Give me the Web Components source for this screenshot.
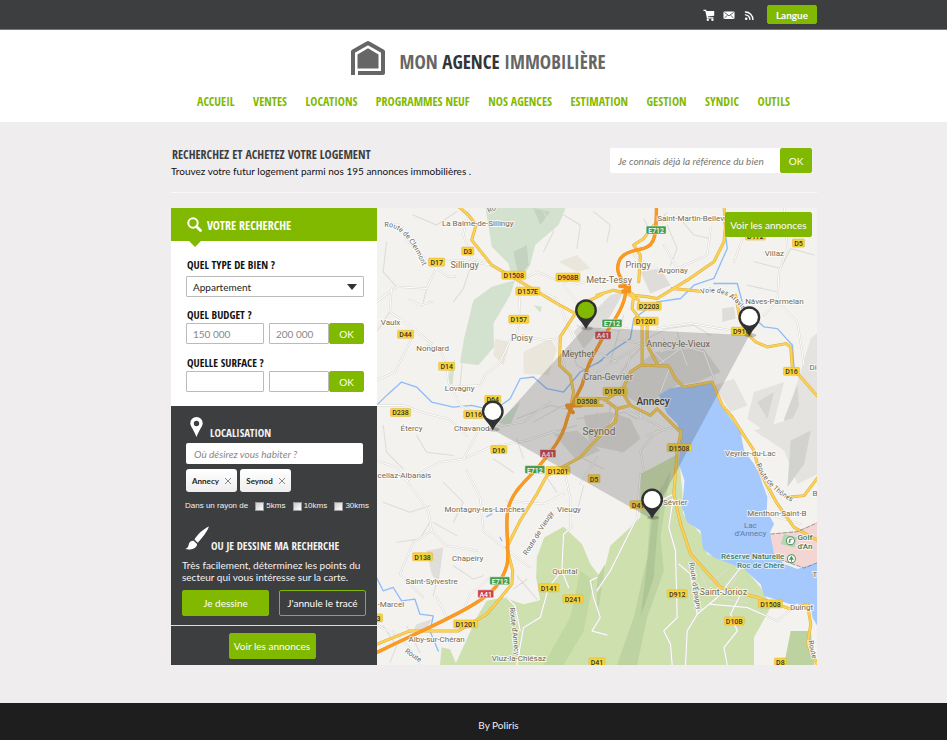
<!DOCTYPE html>
<html lang="fr">
<head>
<meta charset="utf-8">
<title>Mon Agence Immobilière</title>
<style>
  html, body { margin: 0; min-height: 100%; }
  body {
    --green: #80b900; --dark: #3d3e40;
    --cond: "Open Sans Condensed", "Roboto Condensed", sans-serif;
    --left: 171px; --right: 130px;
    background: #efedee; color: #222;
    font: 10px/12px Lato, "Open Sans", sans-serif;
  }
  agence-page { min-height: 100vh; }
</style>
</head>
<body>
<agence-page>
  <top-bar slot="top"></top-bar>
  <site-header slot="top"></site-header>
  <search-intro></search-intro>
  <search-board>
    <search-panel slot="side"></search-panel>
    <town-map></town-map>
  </search-board>
  <site-footer slot="bottom">By Poliris</site-footer>
</agence-page>

<script>
const base = `<style>
  *, *::before, *::after { box-sizing: border-box; }
  :host { display: block; }
  h1, h2, h3, p { margin: 0; }
  a { text-decoration: none; color: inherit; }
  input, select, button { font: inherit; margin: 0; }
</style>`;
function define(name, html) {
  customElements.define(name, class extends HTMLElement {
    constructor() {
      super();
      this.attachShadow({ mode: "open" }).innerHTML = base + html;
    }
  });
}

define("agence-page", `<style>
  :host { display: flex; flex-direction: column; }
  main { flex: 1; padding: 26px var(--right) 38px var(--left); }
</style>
<slot name="top"></slot><main><slot></slot></main><slot name="bottom"></slot>`);

define("green-button", `<style>
  :host { display: inline-flex; }
  button { flex: 1; border: 1px solid var(--green); border-radius: 2px; background: var(--green); color: #fff;
    padding: 0; text-align: center; white-space: nowrap; }
  :host([outline]) button { background: transparent; }
  :host([strong]) button { font-weight: 700; }
</style>
<button type="button"><slot></slot></button>`);

define("top-bar", `<style>
  :host { background: var(--dark); border-bottom: 1px solid #77787a; }
  div { display: flex; justify-content: flex-end; align-items: center; gap: 8px; height: 29px; padding-right: var(--right); }
  a { display: flex; }
  svg { width: 12px; height: 12px; fill: #fff; }
  green-button { width: 50px; height: 19px; margin-left: 4px; }
</style>
<div>
  <a href="#panier" aria-label="Panier"><svg viewBox="0 0 12 12"><path d="M.5.800h2.600l.5 1.300H11.200v4.600L4.800 7.400l.2.900H10.500v1.200H4L2.300 2.100H.5z"/><circle cx="4.800" cy="10.700" r="1.200"/><circle cx="9.400" cy="10.700" r="1.200"/></svg></a>
  <a href="#contact" aria-label="Contact"><svg viewBox="0 0 12 12"><rect x=".5" y="2.500" width="11" height="7.500" rx="1"/><path d="M1.500 3.500 6 6.800l4.500-3.300M1.500 9 4.500 6.200M10.500 9 7.500 6.200" fill="none" stroke="#3d3e40" stroke-width=".8"/></svg></a>
  <a href="#rss" aria-label="Flux RSS"><svg viewBox="0 0 12 12"><circle cx="3.200" cy="9.700" r="1.300"/><path d="M1.900 5.900a4.500 4.500 0 0 1 5 5M1.900 3a7.600 7.600 0 0 1 8 8" fill="none" stroke="#fff" stroke-width="1.400"/></svg></a>
  <green-button strong>Langue</green-button>
</div>`);

define("site-header", `<style>
  :host { background: #fff; padding: 9px 157px 11px 197px; }
  .logo { display: flex; align-items: center; justify-content: center; gap: 14px; color: #666; padding-right: 32px; }
  .logo svg { width: 36px; height: 36px; }
  h1 { font: 700 19px/30px var(--cond); white-space: nowrap; padding-top: 8px; }
  b { color: #333436; }
  nav { display: flex; justify-content: space-between; margin-top: 16px; font: 700 12px/18px var(--cond); color: var(--green); white-space: nowrap; }
</style>
<a class="logo" href="#accueil">
  <svg viewBox="0 0 36 36" fill="none" stroke="#666" stroke-width="4">
    <path d="M3 35V11.500L18 3l15 8.500V33H8" stroke-linejoin="round"/>
    <path d="M7.500 28.500V14.500L18 8.300l10.500 6.200v14z" fill="#666" stroke="none"/></svg>
  <h1>MON <b>AGENCE</b> IMMOBILIÈRE</h1>
</a>
<nav>
  <a href="#accueil">ACCUEIL</a><a href="#ventes">VENTES</a><a href="#locations">LOCATIONS</a><a href="#neuf">PROGRAMMES NEUF</a><a href="#agences">NOS AGENCES</a><a href="#estimation">ESTIMATION</a><a href="#gestion">GESTION</a><a href="#syndic">SYNDIC</a><a href="#outils">OUTILS</a>
</nav>`);

define("search-intro", `<style>
  :host { display: flex; justify-content: space-between; align-items: flex-start; padding: 0 5px 15px 0; border-bottom: 1px solid #faf9fa; margin-bottom: 15px; }
  h2 { font: 700 12px/14px var(--cond); color: var(--dark); padding-left: 1px; }
  p { margin-top: 3px; color: #111; }
  form { display: flex; height: 25px; }
  input { width: 170px; border: 0; border-radius: 2px 0 0 2px; background: #fff; padding: 0 8px; font-style: italic; }
  input::placeholder { color: #777; opacity: 1; }
  green-button { width: 32px; }
</style>
<div><h2>RECHERCHEZ ET ACHETEZ VOTRE LOGEMENT</h2>
<p>Trouvez votre futur logement parmi nos 195 annonces immobilières .</p></div>
<form><input aria-label="Référence du bien" placeholder="Je connais déjà la référence du bien"><green-button>OK</green-button></form>`);

define("search-board", `<style>
  :host { display: grid; grid-template-columns: 206px 1fr; }
</style><slot name="side"></slot><slot></slot>`);

define("search-panel", `<style>
  :host { display: flex; flex-direction: column; background: #fff; }
  header { position: relative; display: flex; align-items: center; gap: 5px; height: 33px; padding-left: 16px; background: var(--green); color: #fff; }
  header::after { content: ""; position: absolute; left: 18px; top: 33px; border: 6px solid transparent; border-top-color: var(--green); border-bottom: 0; }
  h2, h3, .label { font: 700 11px/16px var(--cond); white-space: nowrap; }
  header h2 { font-size: 12px; padding-top: 2px; }
  header svg { width: 15px; height: 15px; }
  .criteria { padding: 16px 13px 14px 15px; color: #111; }
  .label { display: block; padding-left: 1px; }
  input, select { width: 100%; height: 21px; border: 1px solid #bbb; border-radius: 1px; background: #fff; color: #222; padding: 0 6px; min-width: 0; }
  input::placeholder { color: #888; opacity: 1; }
  select { appearance: none; display: block; }
  .select { position: relative; margin: 3px 0 10px; }
  .select::after { content: ""; position: absolute; right: 7px; top: 8px; border: 5px solid transparent; border-top: 6px solid #333; border-bottom: 0; pointer-events: none; }
  .range { display: grid; grid-template-columns: 78px 1fr 35px; }
  .range input + input { margin-left: 5px; width: auto; }
  .budget { margin-bottom: 11px; }
  .place { flex: 1; background: var(--dark); color: #f3f3f3; padding: 11px 11px 9px; }
  .title { display: flex; align-items: flex-end; }
  .pin { gap: 7px; padding-left: 8px; } .pin svg { width: 13px; height: 20px; }
  .brush { gap: 2px; padding-left: 3px; } .brush svg { width: 24px; height: 24px; }
  .title h3 { margin-bottom: -4px; }
  .place input[type=text] { display: block; width: 177px; margin: 6px 4px 5px; border: 0; border-radius: 2px; font-style: italic; padding: 0 8px; }
  .tags { display: flex; gap: 3px; padding-left: 4px; }
  .tags button { display: flex; align-items: center; justify-content: center; gap: 6px; width: 51px; height: 23px; padding: 0; border: 0; border-radius: 3px; background: linear-gradient(#fff, #eee); color: #222; font-size: 8px; font-weight: 700; }
  .tags svg { width: 6px; height: 6px; stroke: #888; stroke-width: 1; }
  .radius { display: flex; justify-content: space-between; align-items: center; margin: 8px -3px 14px 3px; font: 8px/12px "Liberation Sans", sans-serif; white-space: nowrap; }
  .radius label { display: flex; align-items: center; gap: 2px; }
  .radius input { appearance: none; width: 9px; height: 9px; padding: 0; border: 1px solid #999; border-radius: 0; background: linear-gradient(135deg, #ccc, #fff); }
  .actions { display: flex; justify-content: space-between; margin-top: 7px; }
  .actions green-button, footer green-button { width: 87px; height: 26px; }
  .brush + p { margin-top: 9px; white-space: nowrap; }
  footer { display: flex; justify-content: center; padding: 7px 4px 6px 0; border-top: 1px solid #ddd; background: var(--dark); }
</style>
<header><svg viewBox="0 0 15 15" fill="none" stroke="#fff"><circle cx="6" cy="6" r="4.700" stroke-width="2"/><path d="m9.500 9.500 4 4" stroke-width="2.800" stroke-linecap="round"/></svg><h2>VOTRE RECHERCHE</h2></header>
<div class="criteria">
  <label class="label" for="type">QUEL TYPE DE BIEN ?</label>
  <div class="select"><select id="type"><option>Appartement</option></select></div>
  <label class="label" for="bmin">QUEL BUDGET ?</label>
  <div class="range budget"><input id="bmin" placeholder="150 000"><input aria-label="Budget maximum" placeholder="200 000"><green-button>OK</green-button></div>
  <label class="label" for="smin">QUELLE SURFACE ?</label>
  <div class="range"><input id="smin"><input aria-label="Surface maximum"><green-button>OK</green-button></div>
</div>
<div class="place">
  <div class="title pin"><svg viewBox="0 0 13 20"><path fill="#fff" fill-rule="evenodd" d="M6.500 0A6.200 6.200 0 0 0 .3 6.300C.3 9.500 3.500 12 6.500 20 9.500 12 12.700 9.500 12.700 6.300A6.200 6.200 0 0 0 6.500 0zm0 3.800a2.700 2.700 0 1 1 0 5.400 2.700 2.700 0 0 1 0-5.400z"/></svg><h3>LOCALISATION</h3></div>
  <input type="text" aria-label="Localisation" placeholder="Où désirez vous habiter ?">
  <div class="tags">
    <button type="button">Annecy <svg viewBox="0 0 6 6"><path d="m0 0 6 6M6 0 0 6"/></svg></button>
    <button type="button">Seynod <svg viewBox="0 0 6 6"><path d="m0 0 6 6M6 0 0 6"/></svg></button>
  </div>
  <div class="radius"><span>Dans un rayon de</span><label><input type="checkbox">5kms</label><label><input type="checkbox">10kms</label><label><input type="checkbox">30kms</label></div>
  <div class="title brush"><svg viewBox="0 0 24 24" fill="#fff"><path d="M24 .5C18 3 12.500 8.500 9.500 13.500l3.200 3.200C17 12 22 6 24 .5zM8.600 14.800C5.500 14.600 4 16.500 3.600 19c-.3 2-1.300 3-3.300 4 4 1 10 .5 11.500-3.500.3-1 .2-1.400 0-1.800z"/></svg><h3>OU JE DESSINE MA RECHERCHE</h3></div>
  <p>Très facilement, déterminez les points du<br>secteur qui vous intéresse sur la carte.</p>
  <div class="actions"><green-button>Je dessine</green-button><green-button outline>J'annule le tracé</green-button></div>
</div>
<footer><green-button>Voir les annonces</green-button></footer>`);

define("site-footer", `<style>
  :host { background: #1e1e1e; color: #eee; text-align: center; padding: 16px 0 9px 50px; }
</style><slot></slot>`);

/* Origins of the drawing tiles (E spans the whole map); tile paths use 3 units per map pixel. */
const tiles = { A: [0, -3], B: [220, -3], C: [0, 222], D: [220, 222], E: [0, -3] };
const land = [
  ["A", "#d3e2cf", "M325 0H570L545 60 475 120 460 180 430 225 405 218 395 175 345 125Z"],
  ["A", "#c3d3c0", "M410 140 450 120 455 180 425 215Z M470 10 520 20 490 60Z"],
  ["A", "#d3e2cf", "M290 285 345 245 415 225 400 270 350 355 352 425 305 480 250 472 262 400Z M220 485 235 460 228 535 215 540Z M360 650 430 590 400 660Z M470 300 495 305 490 322Z"],
  ["A", "#ebe6db", "M355 400 400 410 380 480 350 450Z M440 440 520 400 540 430 515 510 440 505Z M545 170 600 150 640 190 600 200Z"],
  ["E", "#dfddd9", "M790 200 850 190 880 240 820 265Z M1035 310 1070 305 1075 340 1035 350Z M860 30 870 20 855 60Z M590 380 640 330 700 270 740 260 690 350 620 430Z M830 440 980 430 1030 500 960 530 900 540 800 600 720 560 760 500Z M620 630 700 620 760 640 790 700 740 740 640 720Z"],
  ["B", "#e4e3e0", "M545 690 590 560 640 400 662 380 662 690Z M470 560 560 530 520 690 450 640Z M350 540 410 520 450 600 400 620Z"],
  ["B", "#d6d5d2", "M560 640 600 540 605 600 570 670Z M480 590 530 560 510 640Z"],
  ["D", "#e4e3e0", "M470 0 662 -60 662 130 600 160 560 60Z"],
  ["D", "#d2d2d1", "M580 30 640 0 620 100 570 170Z"],
  ["C", "#e0deda", "M120 580 165 565 150 595 110 600Z M530 10 600 0 670 60 600 90Z M150 360 200 350 185 460 165 430Z"],
  ["C", "#cde0ae", "M235 702 300 560 330 510 380 500 440 520 490 508 478 440 480 380 502 320 560 288 615 340 640 400 675 445 700 345 760 290 790 260 790 130 905 70 915 180 918 250 970 310 990 370 1100 410 1150 470 1182 525 1130 620 1130 702Z M195 650 220 655 240 702H190Z"],
  ["D", "#bdd3a2", "M160 240 220 120 190 320 200 420 150 560 120 702H60L110 560 150 380Z M0 440 25 400 0 560Z"],
  ["D", "#aec595", "M165 270 195 160 178 330 170 440 130 560 150 400Z"],
  ["C", "#c2d8a3", "M610 420 650 450 620 600 560 702H500L580 560Z"],
  ["D", "#bcd39f", "M580 600 640 600 650 702H560Z"],
  ["D", "#f3d5d3", "M520 310 600 300 662 275V395L620 412 530 380Z"],
  ["D", "#b4d7b0", "M550 340 590 350 600 320 560 310Z"],
  ["D", "#a5c8fd", "M185-105 215-125 265-135 345-140 368-80 405-30 430 5 440 60 470 100 485 130 510 200 508 240 530 280 518 305 530 370 560 400 600 415 662 395V590L645 560 640 525 580 520 500 495 490 460 440 415 350 380 318 355 310 300 270 275 255 230 262 150 245 100 250 10 240-20 210-50Z"],
];
const small = [
  ["A", "M0 290 60 245 150 250 190 165 255 165 340 180 M45 250 40 320 100 360 165 415 M0 525 55 500 105 400 M25 55 70 60 90 105 150 165 170 185 215 215 235 215 M275 20 260 90 285 160 345 180 M190 430 210 480 215 530 250 600 300 625"],
  ["A", "M435 225 480 200 540 225 600 235 660 225 M540 400 500 405 450 395 400 405 370 470 325 510 310 540 220 545 M540 400 565 490 M0 600 80 600 150 625 215 640 270 690 M350 665 440 650 520 590 M165 290 130 300 100 285 M425 235 430 330 420 390 M445 245 540 280 560 330 590 400 M560 240 600 290 650 300"],
  ["B", "M200 120 240 190 330 150 340 70 M410 170 440 90 520 60 600 90 640 80 M560 0 570 130 545 200 540 290 500 330 M470 300 430 380 280 355 180 370 M0 380 90 370 M545 295 600 350 620 480 M190 440 250 420 320 440 350 520 M60 400 150 420 200 470 M180 480 250 430 M0 500 80 450 130 420 M110 150 170 190 260 200"],
  ["C", "M0 90 60 110 90 150 155 240 165 300 210 345 300 360 M90 150 190 95 260 85 340 50 450 30 540 0 M270 120 310 200 320 300 380 350 M260 85 300 10 M50 600 90 640 130 702 M0 580 50 610 M165 300 110 335 70 430 140 500 M180 500 210 560 M260 540 280 490 340 440 M395 360 460 410 M610 160 660 80 M560 110 580 200 580 290 M390 210 500 220 560 190"],
  ["C", "M585 290 560 310 555 420 515 470 490 560 440 590 420 702 M555 420 575 470 M390 500 415 525 430 600 M660 440 640 450 650 500 670 560 645 600 690 612 M790 130 780 260 700 420 660 480"],
  ["D", "M230 190 215 290 235 360 240 560 200 600 220 640 225 702 M300 550 270 600 265 702 M245 400 280 430 300 550 360 500 430 410 M430 490 400 550 420 600 380 650 390 702 M340 520 450 530 540 570 600 520 M140 120 130 60 180 0 M230 190 190 210 M510 250 610 280 M460 40 520 200"],
  ["B", "M0 440 60 470 M20 590 110 620 200 670 M150 690 240 660 M60 620 20 690 M100 450 70 560 M220 480 190 560 M240 400 270 480 M130 640 130 600"],
];
const streets = [
  ["E", "M500 20 530 80 500 140 M560 30 610 60 600 130 M650 20 700 60 690 110 M870 60 900 130 880 180 M900 30 950 90 1000 100 M1130 170 1210 190 1240 130 1310 150 M1110 240 1200 260 M800 40 830 100 M740 330 720 400 700 470 M640 340 690 300 M600 360 650 390 700 390 M580 430 600 480 640 500 M720 520 760 460 790 430 M810 400 870 370 950 360 1000 390 M820 520 850 480 900 460 M860 400 880 480 M900 380 930 470 950 530 M850 440 960 430 M870 500 980 470 M750 570 800 540 830 500 M780 520 820 560 M680 640 740 620 780 640 M640 660 700 700 760 690 M660 620 650 740 M700 600 690 720 M740 640 730 740 M600 640 660 630 M470 650 560 600 M420 640 520 600 570 610 M490 690 600 660 M600 700 620 760 680 790"],
  ["E", "M30 110 20 200 60 245 M110 30 180 60 240 20 M150 250 140 290 M0 380 40 320 M230 290 260 250 280 190 M250 540 260 440 M150 420 190 430 M20 660 30 740 80 790 M120 690 150 740 230 750 M20 890 100 920 160 900 M200 830 260 890 230 950 M170 950 240 990 M420 700 440 760 M350 760 410 800 M60 1010 130 1000 160 950 M230 1080 290 1120 320 1110 M160 1040 190 1080 170 1170 M20 1260 60 1320 40 1370 M90 1260 130 1340 M420 1110 480 1180 M410 1150 450 1120 M620 840 600 920 M500 800 540 860 M1050 1090 1000 1130 M1080 1110 1040 1180 1110 1190 M970 1100 1000 1170"],
];
const water = [
  ["A", "M0 600 30 570 75 530 120 545 165 590 230 605 285 600 350 615 400 580 430 520 470 515 510 550 560 560 610 500 675 465"],
  ["B", "M380 50 390 130 350 220 290 240 250 280 180 290 110 340 100 400 40 440 0 475 M350 235 420 235 440 310 500 365 540 370 585 420 590 490"],
  ["C", "M0 440 20 480 50 470 75 510 115 505 130 550 170 555 160 600 185 660 M370 320 375 330 M330 258 345 250"],
];
const yellow = [
  ["A", "M240 0 275 30 298 60 285 105 345 180 440 235 540 295 595 325 640 285 675 268"],
  ["A", "M595 325 550 395 548 480 580 510 590 560 582 600 675 600"],
  ["B", "M380 0 385 60 380 110 350 170 270 225 180 280 150 275 110 270 85 250 M0 270 50 255 90 265 125 285 M125 230 130 150 110 120 140 100 170 60 M110 270 105 310 135 350 135 480 M150 340 150 420 180 475 M225 250 310 258"],
  ["B", "M415 270 430 350 455 390 475 410 510 425 565 415 580 425 585 490 610 515 662 575"],
  ["B", "M0 580 30 580 75 555 100 500 130 480 215 482 235 520 260 545 345 530 375 600 405 635 440 690 M60 610 55 650 0 690 M75 560 100 600 120 610 160 630 180 610 250 680 252 700 M20 580 60 610 100 600"],
  ["C", "M0 640 100 600 245 600 330 550 405 460 408 420 390 350 430 270 480 190 510 135 610 80 675 10"],
  ["D", "M252 0 240 60 230 190 250 280 280 370 370 470 480 500 580 535 630 520 640 580 630 640 660 702 M430 0 470 60 485 120 540 220 590 290 662 330 M570 200 620 195 662 140"],
];
const orange = [
  ["E", "M838 0C838 90 835 120 800 130C750 140 722 150 722 190C722 220 748 225 746 260C740 320 690 370 665 420C640 460 625 500 615 540C590 590 575 620 565 660C550 710 515 745 480 790C430 840 400 870 392 920C385 980 400 1040 390 1080C375 1130 350 1160 290 1196C220 1240 100 1290 0 1340"],
];
/* [text, x, y, size, anchor] */
const towns = [
  ["La Balme-de-Sillingy",101,18,8],["Sillingy",88,60],["Vaulx",14,117,8],["Nonglard",56,143,8],["Poisy",145,133],["Meythet",201,149],
  ["Lovagny",83,183,8],["Étercy",35,223,8],["Chavanod",95,223,8],["Metz-Tessy",232,75],["Cran-Gevrier",231,172],["Seynod",222,227,10],
  ["Annecy-le-Vieux",301,139],["Saint-Martin-Bellevue",280,13,8,"start"],["Pringy",261,60],["Argonay",296,65,8],["Villaz",397,48,8],["Nâves-Parmelan",397,96,8],
  ["Din",432,162,8,"start"],["cellaz-Albanais",1,269,8,"start"],["Montagny-les-Lanches",108,303,8],["Vieugy",192,303,8],["Chapeiry",91,352,8],["Quintal",188,365,8],
  ["Saint-Sylvestre",55,375,8],["-Marcel",1,398,8,"start"],["Alby-sur-Chéran",60,433,8],["Viuz-la-Chiésaz",142,452,8],["Veyrier-du-Lac",373,247,8],["Sévrier",298,296,8],
  ["Menthon-Saint-B",370,307,8,"start"],["Saint-Jorioz",346,386],["Duingt",424,401,8],["B",435,287,8,"start"],["T",435,368,8,"start"],
];
const shields = [
  ["D3",91,43],["D17",60,54],["D1508",137,67],["D908B",191,69],["D157E",151,83],["D157",142,111],["D44",29,126],["D14",70,158],["D238",24,204],
  ["D64",116,191],["D116",97,206],["D3508",210,193],["D2203",272,98],["D1201",269,113],["D5",421,35],["D172",378,28],["D916",364,123],["D16",414,163],
  ["D1501",238,183],["D16",122,241],["D5",217,270],["D1201",181,262],["D138",46,348],["D141",172,379],["D241",196,390],["D1201",89,415],["3",2,409],
  ["D1508",302,239],["D41",261,296],["D912",300,385],["D1508",393,395],["D10B",357,412],["D41",220,453],["D8",403,453],
  ["E712",279,22,"e"],["E712",235,115,"e"],["E712",158,261,"e"],["E712",123,372,"e"],["A41",226,127,"a"],["A41",171,245,"a"],["A41",109,385,"a"],
];
const at = (t, inner) => `<g transform="translate(${tiles[t]}) scale(.3333)">${inner}</g>`;
const lines = (list, cls) => list.map(([t, d]) => at(t, `<path class="${cls}" d="${d}"/>`)).join("");
const pin = (x, y, fill) => `<g transform="translate(${x} ${y})"><ellipse cx="1" cy="18" rx="6" ry="2" opacity=".2"/><path fill="#2f3032" d="M0-11A11 11 0 0 0-10.500 3C-9 8-4 11 0 19 4 11 9 8 10.500 3A11 11 0 0 0 0-11z"/><circle r="8.500" fill="${fill}"/></g>`;

define("town-map", `<style>
  :host { position: relative; min-width: 0; min-height: 456px; overflow: hidden; background: #f3f2ef; }
  svg { display: block; width: 100%; height: 100%; }
  path { stroke-linejoin: round; stroke-linecap: round; }
  .case, .white, .street, .water, .ycase, .yel, .ocase, .or { fill: none; }
  .case { stroke: #d8d6d2; stroke-width: 6; } .white { stroke: #fff; stroke-width: 3; }
  .street { stroke: #dddbd7; stroke-width: 3; }
  .water { stroke: #8fbcf8; stroke-width: 4; }
  .ycase { stroke: #dfae48; stroke-width: 9; } .yel { stroke: #fbd251; stroke-width: 6; }
  .ocase { stroke: #e89020; stroke-width: 10; } .or { stroke: #fc9a22; stroke-width: 8; }
  text { font-family: Roboto, sans-serif; }
  .town { fill: #776a52; stroke: #fff; stroke-width: 2; stroke-opacity: .7; paint-order: stroke; }
  .road { fill: #6b655c; font-size: 7px; stroke: #fff; stroke-width: 2; stroke-opacity: .7; paint-order: stroke; }
  .shield { font-size: 7px; font-weight: 500; text-anchor: middle; fill: #333; }
  .inv { fill: #fff; }
  .park { fill: #3f7d5c; font-size: 8px; font-weight: 500; stroke: #fff; stroke-width: 2; stroke-opacity: .6; paint-order: stroke; }
  .lake { fill: #5d7ba6; font-size: 8px; text-anchor: middle; }
  green-button { position: absolute; right: 5px; top: 4px; width: 87px; height: 25px; }
</style>
<svg viewBox="0 0 440 456" preserveAspectRatio="xMidYMid slice" role="img" aria-label="Carte des environs d'Annecy">
  ${land.map(([t, f, d]) => at(t, `<path fill="${f}" d="${d}"/>`)).join("")}
  ${lines(streets, "street")}${lines(water, "water")}${lines(small, "case")}${lines(small, "white")}
  ${lines(yellow, "ycase")}${lines(yellow, "yel")}${lines(orange, "ocase")}${lines(orange, "or")}
  <path d="M243 78h9v5h-6M190 197h14M191 199l5 5" fill="none" stroke="#f39320" stroke-width="4"/>
  ${at("D", '<path d="M520 310 600 303 662 275M530 380 620 412 662 395" fill="none" stroke="#777" stroke-width="2" stroke-dasharray="12 6"/>')}
  ${shields.map(([s, x, y, k]) => { const w = s.length * 4 + 4; return `<rect x="${x - w / 2}" y="${y - 4}" width="${w}" height="8" rx="1" fill="${k === "e" ? "#4a9a4c" : k === "a" ? "#cf3f4c" : "#fcd436"}" stroke="${k ? "#fff" : "#d9b23a"}" stroke-width=".5"/><text class="shield${k ? " inv" : ""}" x="${x}" y="${y + 3}">${s}</text>`; }).join("")}
  ${towns.map(([s, x, y, z = 9, a = "middle"]) => `<text class="town" x="${x}" y="${y}" font-size="${z}" text-anchor="${a}">${s}</text>`).join("")}
  <text class="town" x="276" y="197" font-size="10" font-weight="500" text-anchor="middle" style="fill:#3d382f">Annecy</text>
  <path id="r1" fill="none" d="M8 19Q28 16 46 58"/><text class="road"><textPath href="#r1">Route de Clermont</textPath></text>
  <path id="r2" fill="none" d="M324 86Q350 78 368 106"/><text class="road"><textPath href="#r2">Voie des Aravis</textPath></text>
  <path id="r3" fill="none" d="M379 256Q389 282 420 296"/><text class="road"><textPath href="#r3">Route de Thônes</textPath></text>
  <text class="road" transform="translate(150 347) rotate(-58)">Route de Vieugy</text>
  <text class="road" transform="translate(133 399) rotate(84)">Route d'Annecy</text>
  <text class="road" transform="translate(28 443) rotate(35)">Route</text>
  <text class="road" transform="translate(312 354) rotate(81)">Route d'Épagny</text>
  <text class="road" transform="translate(431 432) rotate(78)">Route</text>
  <text class="road" transform="translate(112 5) rotate(-25)">Ro</text>
  <text class="lake" x="373" y="319">Lac</text><text class="lake" x="373" y="327">d'Annecy</text>
  <text class="park" x="407" y="350" text-anchor="end">Réserve Naturelle</text><text class="park" x="407" y="359" text-anchor="end">Roc de Chère</text>
  <text class="park" x="420" y="331">Golf</text><text class="park" x="420" y="340">d'An</text>
  <g fill="#fff" stroke="#4d9560"><circle cx="413" cy="332" r="4"/><circle cx="414" cy="350" r="4"/></g>
  <path fill="#4d9560" d="M412 330h3v1h-2v3h-2zM414 347l2.500 4h-2v2h-1v-2h-2z"/>
  <path d="M208 119 372 127 274 310 116 221Z" fill="#4b4b4b" opacity=".24"/>
  ${pin(209, 102, "#80b900")}${pin(372, 109, "#fff")}${pin(116, 203, "#fff")}${pin(275, 291, "#fff")}
</svg>
<green-button>Voir les annonces</green-button>`);
</script>
</body>
</html>
